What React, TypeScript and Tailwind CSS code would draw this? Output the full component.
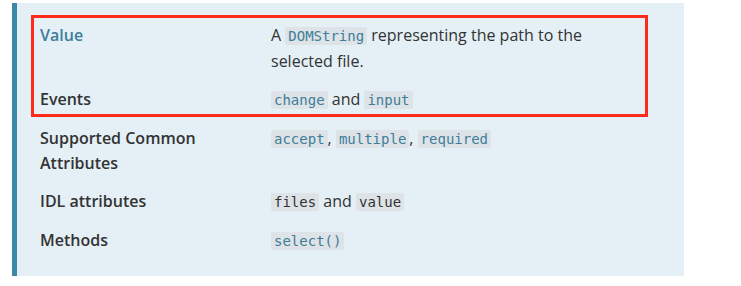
import React from 'react';

const Code = ({ children, link }: { children: React.ReactNode; link?: boolean }) => (
  <code
    className={`rounded-[2px] bg-[#dde3e7] px-[3px] py-[1px] text-[14px] font-['DejaVu_Sans_Mono',monospace] ${
      link ? 'text-[#3d7e9a]' : 'text-[#333]'
    }`}
  >
    {children}
  </code>
);

const Row = ({ label, link, children }: { label: React.ReactNode; link?: boolean; children: React.ReactNode }) => (
  <div className="flex py-[6.5px]">
    <div className={`w-[231px] shrink-0 font-semibold ${link ? 'text-[#3d7e9a]' : 'text-[#333]'}`}>{label}</div>
    <div className="w-[340px] text-[#333]">{children}</div>
  </div>
);

export default function App() {
  return (
    <div className="min-h-screen bg-white pt-[3px] pl-[12px] font-['Open_Sans',sans-serif] text-[16px] leading-[25px]">
      <div className="w-[672px] border-l-[5px] border-[#3d88a9] bg-[#e4eff6] pt-[13px] pb-[16px] pl-[23px]">
        <div className="relative">
          <div className="pointer-events-none absolute top-[-1px] bottom-[2px] left-[-9px] right-[36px] border-[3px] border-[#ff2a1a]" />
          <Row label="Value" link>
            A <Code link>DOMString</Code> representing the path to the selected file.
          </Row>
          <Row label="Events">
            <Code link>change</Code> and <Code link>input</Code>
          </Row>
        </div>
        <Row label={<>Supported Common<br />Attributes</>}>
          <Code link>accept</Code>, <Code link>multiple</Code>, <Code link>required</Code>
        </Row>
        <Row label="IDL attributes">
          <Code>files</Code> and <Code>value</Code>
        </Row>
        <Row label="Methods">
          <Code link>select()</Code>
        </Row>
      </div>
    </div>
  );
}
